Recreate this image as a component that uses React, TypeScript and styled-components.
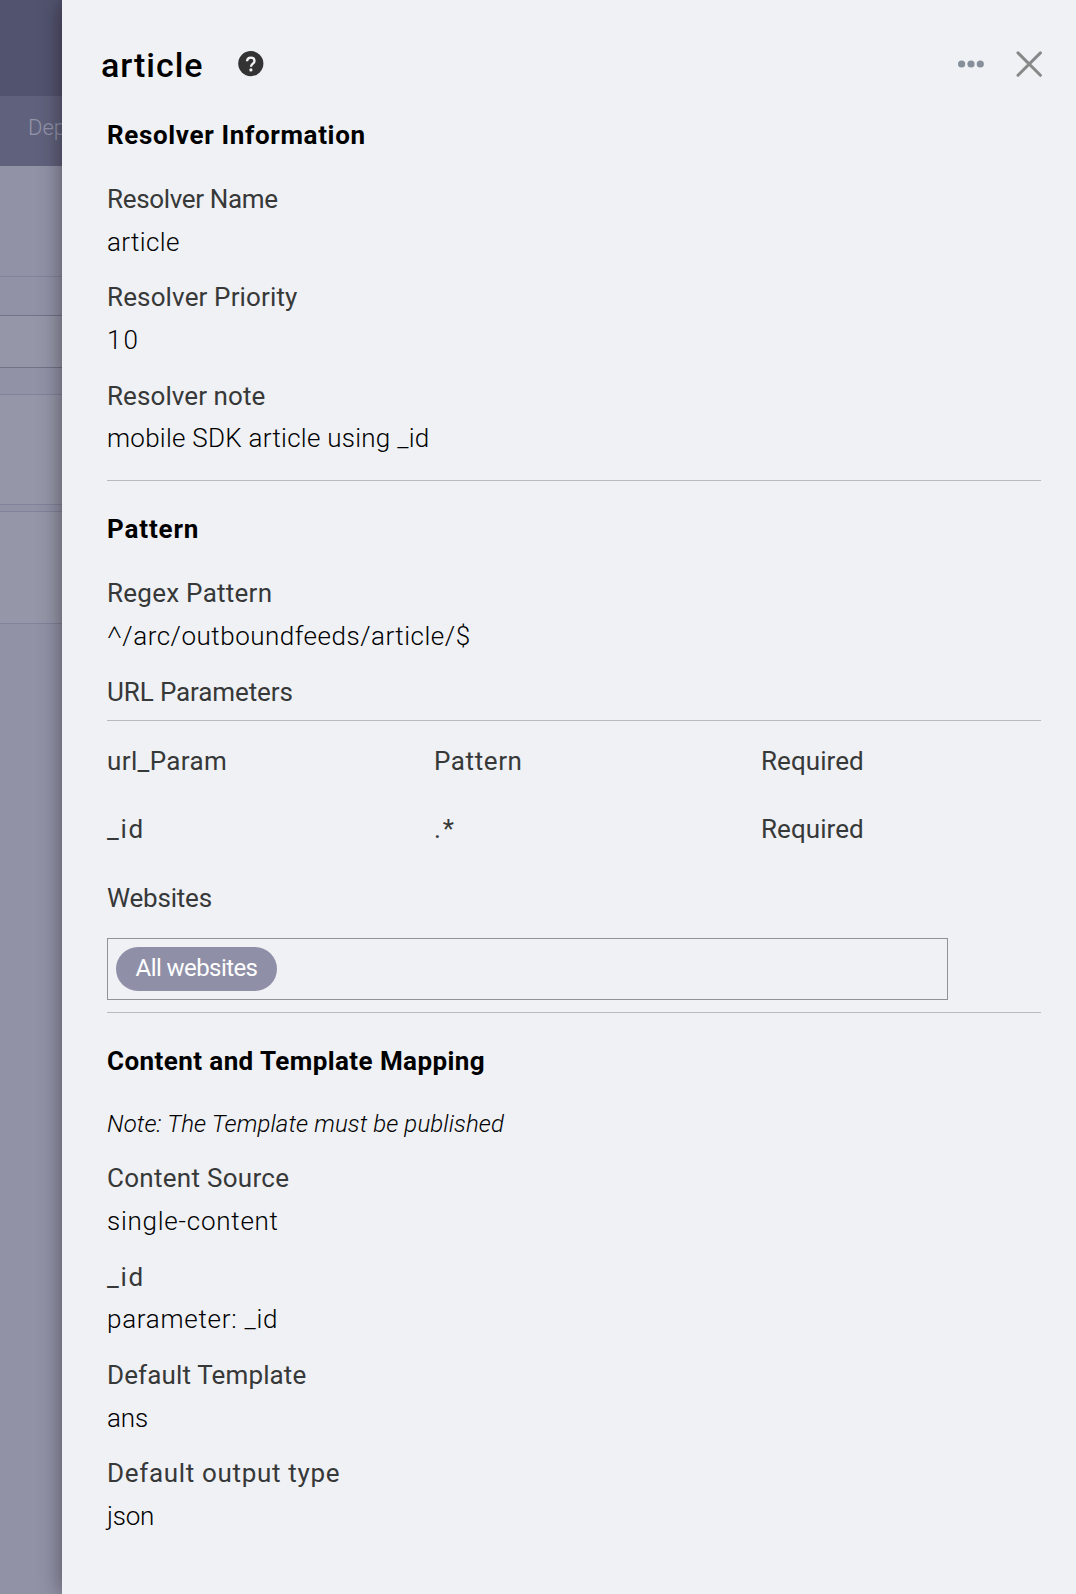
import React from "react";
import styled, { createGlobalStyle } from "styled-components";

const GlobalStyle = createGlobalStyle`
  * { box-sizing: border-box; }
  body { margin: 0; background: #eff1f5; font-family: Roboto, "Liberation Sans", sans-serif; }
`;

const Page = styled.div`
  display: flex;
  width: 1076px;
  height: 1594px;
  overflow: hidden;
`;

const Backdrop = styled.aside`
  flex: 0 0 62px;
  display: flex;
  flex-direction: column;
  background: #9192a6;
  overflow: hidden;
`;

const TopBar = styled.div`
  flex: 0 0 96px;
  background: #52536e;
`;

const NavBar = styled.div`
  flex: 0 0 70px;
  padding: 17px 0 0 28px;
  background: #60617c;
  color: #9495ab;
  font-size: 22px;
  line-height: 29px;
  font-weight: 300;
  white-space: nowrap;
`;

const Band = styled.div<{ $h: number; $fill?: string; $line?: string }>`
  flex: 0 0 ${(p) => p.$h}px;
  background: ${(p) => p.$fill ?? "#9192a6"};
  border-bottom: 1px solid ${(p) => p.$line ?? "#82839a"};
`;

const Panel = styled.main`
  flex: 1;
  position: relative;
  padding: 0 35px 0 45px;
  background: #eff1f5;
  color: #000;
  box-shadow: 0 0 22px rgba(0, 0, 0, 0.45);
`;

const Header = styled.header`
  display: flex;
  align-items: center;
  height: 120px;
  margin: 0 -1px 0 -6px;
  padding-top: 8px;
`;

const Title = styled.h1`
  margin: 0 34px 0 0;
  padding-top: 2px;
  width: 103px;
  font-size: 34px;
  line-height: 40px;
  font-weight: 500;
  letter-spacing: 0.95px;
  white-space: nowrap;
`;

const Icon = styled.svg`
  display: block;
  flex: none;
`;

const Actions = styled.div`
  display: flex;
  align-items: center;
  gap: 32px;
  margin-left: auto;
`;

type TextProps = { $top: number; $ls: number };

const Text = styled.div<TextProps>`
  margin-top: ${(p) => p.$top}px;
  letter-spacing: ${(p) => p.$ls}px;
  font-size: 26px;
  line-height: 30px;
  white-space: nowrap;
`;

const Heading = styled(Text).attrs({ as: "h2" })`
  margin-bottom: 0;
  font-weight: 700;
`;

const Label = styled(Text)`
  color: #373838;
  font-weight: 400;
`;

const Value = styled(Text)`
  font-weight: 300;
`;

const Caret = styled.span`
  font-family: "Noto Sans", sans-serif;
  line-height: 1;
`;

const Note = styled(Text)`
  font-size: 24px;
  font-style: italic;
  font-weight: 300;
`;

const Rule = styled.hr<{ $top: number }>`
  height: 1px;
  margin: ${(p) => p.$top}px 0 0;
  border: 0;
  background: #b9babd;
`;

const ParamRow = styled.div`
  display: grid;
  grid-template-columns: 327px 327px 1fr;
`;

const TagBox = styled.div`
  display: flex;
  align-items: center;
  width: 841px;
  height: 62px;
  margin-top: 25px;
  padding-left: 8px;
  border: 1px solid #919296;
`;

const Tag = styled.span<{ $ls: number }>`
  width: 161px;
  height: 44px;
  border-radius: 22px;
  background: #8f90a8;
  color: #fff;
  font-size: 24px;
  line-height: 43px;
  text-align: center;
  letter-spacing: ${(p) => p.$ls}px;
  white-space: nowrap;
`;

export default function App() {
  return (
    <Page>
      <GlobalStyle />
      <Backdrop>
        <TopBar />
        <NavBar>Dep</NavBar>
        <Band $h={111} />
        <Band $h={39} $line="#717288" />
        <Band $h={52} $fill="#9596a8" $line="#717288" />
        <Band $h={27} />
        <Band $h={110} $fill="#9596a8" />
        <Band $h={7} />
        <Band $h={112} $fill="#9596a8" />
      </Backdrop>
      <Panel>
        <Header>
          <Title>article</Title>
          <Icon width="26" height="26" viewBox="0 0 26 26" aria-label="Help">
            <circle cx="12.8" cy="12.6" r="12.6" fill="#333" />
            <path d="M9 10.300C9.100 8 10.700 6.700 12.800 6.700c2.200 0 3.700 1.200 3.700 3.200 0 2.800-3.500 2.900-3.500 5.900" fill="none" stroke="#f4f4f7" strokeWidth="2.300" />
            <circle cx="12.900" cy="18.900" r="1.600" fill="#f4f4f7" />
          </Icon>
          <Actions>
            <Icon width="26" height="8" viewBox="0 0 26 8" fill="#87909a" aria-label="More">
              <circle cx="3.600" cy="4" r="3.600" />
              <circle cx="13" cy="4" r="3.600" />
              <circle cx="22.300" cy="4" r="3.600" />
            </Icon>
            <Icon width="26" height="26" viewBox="0 0 26 26" aria-label="Close">
              <path d="M2 1.900l22.400 22.400M24.400 1.900L2 24.300" stroke="#888" strokeWidth="3" strokeLinecap="round" />
            </Icon>
          </Actions>
        </Header>

        <Heading $top={0} $ls={0.65}>Resolver Information</Heading>
        <Label $top={34} $ls={-0.34}>Resolver Name</Label>
        <Value $top={13} $ls={0.37}>article</Value>
        <Label $top={25} $ls={0.14}>Resolver Priority</Label>
        <Value $top={13} $ls={2}>10</Value>
        <Label $top={26} $ls={0.08}>Resolver note</Label>
        <Value $top={12} $ls={0.26}>mobile SDK article using _id</Value>
        <Rule $top={27} />

        <Heading $top={33} $ls={0.85}>Pattern</Heading>
        <Label $top={34} $ls={0.26}>Regex Pattern</Label>
        <Value $top={13} $ls={0.51}><Caret>^</Caret>/arc/outboundfeeds/article/$</Value>
        <Label $top={26} $ls={-0.11}>URL Parameters</Label>
        <Rule $top={13} />
        <ParamRow>
          <Label $top={25} $ls={0.37}>url_Param</Label>
          <Label $top={25} $ls={0.6}>Pattern</Label>
          <Label $top={25} $ls={0.06}>Required</Label>
        </ParamRow>
        <ParamRow>
          <Label $top={38} $ls={1.7}>_id</Label>
          <Label $top={38} $ls={1.8}>.*</Label>
          <Label $top={38} $ls={0.06}>Required</Label>
        </ParamRow>
        <Label $top={39} $ls={-0.2}>Websites</Label>
        <TagBox>
          <Tag $ls={-0.57}>All websites</Tag>
        </TagBox>
        <Rule $top={12} />

        <Heading $top={33} $ls={0.42}>Content and Template Mapping</Heading>
        <Note $top={33} $ls={0.12}>Note: The Template must be published</Note>
        <Label $top={24} $ls={0.28}>Content Source</Label>
        <Value $top={13} $ls={0.75}>single-content</Value>
        <Label $top={26} $ls={1.7}>_id</Label>
        <Value $top={12} $ls={0.74}>parameter: _id</Value>
        <Label $top={26} $ls={0.13}>Default Template</Label>
        <Value $top={13} $ls={-0.1}>ans</Value>
        <Label $top={25} $ls={0.67}>Default output type</Label>
        <Value $top={13} $ls={-0.2}>json</Value>
      </Panel>
    </Page>
  );
}
